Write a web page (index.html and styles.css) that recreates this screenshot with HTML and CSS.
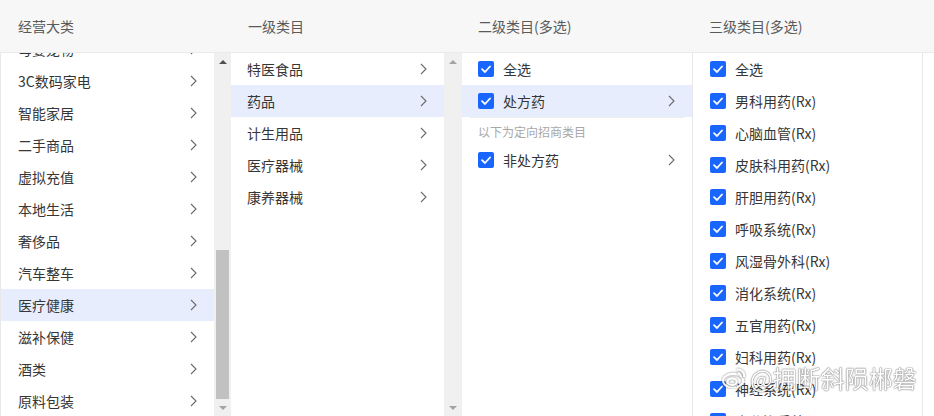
FILE: index.html
```html
<!DOCTYPE html>
<html lang="zh-CN">
<head>
<meta charset="utf-8">
<title>类目选择</title>
<link rel="stylesheet" href="styles.css">
</head>
<body>
<div class="board">
  <section class="col col-1">
    <div class="col-head">经营大类</div>
    <div class="col-body with-border-left">
      <div class="list-view">
        <ul class="list list-scrolled">
          <li class="row"><span>母婴宠物</span><svg class="chev" viewBox="0 0 7 12"><path d="M1 1 L6 6 L1 11"/></svg></li>
          <li class="row"><span>3C数码家电</span><svg class="chev" viewBox="0 0 7 12"><path d="M1 1 L6 6 L1 11"/></svg></li>
          <li class="row"><span>智能家居</span><svg class="chev" viewBox="0 0 7 12"><path d="M1 1 L6 6 L1 11"/></svg></li>
          <li class="row"><span>二手商品</span><svg class="chev" viewBox="0 0 7 12"><path d="M1 1 L6 6 L1 11"/></svg></li>
          <li class="row"><span>虚拟充值</span><svg class="chev" viewBox="0 0 7 12"><path d="M1 1 L6 6 L1 11"/></svg></li>
          <li class="row"><span>本地生活</span><svg class="chev" viewBox="0 0 7 12"><path d="M1 1 L6 6 L1 11"/></svg></li>
          <li class="row"><span>奢侈品</span><svg class="chev" viewBox="0 0 7 12"><path d="M1 1 L6 6 L1 11"/></svg></li>
          <li class="row"><span>汽车整车</span><svg class="chev" viewBox="0 0 7 12"><path d="M1 1 L6 6 L1 11"/></svg></li>
          <li class="row active"><span>医疗健康</span><svg class="chev" viewBox="0 0 7 12"><path d="M1 1 L6 6 L1 11"/></svg></li>
          <li class="row"><span>滋补保健</span><svg class="chev" viewBox="0 0 7 12"><path d="M1 1 L6 6 L1 11"/></svg></li>
          <li class="row"><span>酒类</span><svg class="chev" viewBox="0 0 7 12"><path d="M1 1 L6 6 L1 11"/></svg></li>
          <li class="row"><span>原料包装</span><svg class="chev" viewBox="0 0 7 12"><path d="M1 1 L6 6 L1 11"/></svg></li>
        </ul>
      </div>
      <div class="scrollbar">
        <div class="sb-btn"><span class="tri-up dark"></span></div>
        <div class="sb-track"><div class="sb-thumb" style="margin-top:180px;height:149px"></div></div>
        <div class="sb-btn"><span class="tri-down"></span></div>
      </div>
    </div>
  </section>

  <section class="col col-2">
    <div class="col-head">一级类目</div>
    <div class="col-body">
      <div class="list-view">
        <ul class="list">
          <li class="row"><span>特医食品</span><svg class="chev" viewBox="0 0 7 12"><path d="M1 1 L6 6 L1 11"/></svg></li>
          <li class="row active"><span>药品</span><svg class="chev" viewBox="0 0 7 12"><path d="M1 1 L6 6 L1 11"/></svg></li>
          <li class="row"><span>计生用品</span><svg class="chev" viewBox="0 0 7 12"><path d="M1 1 L6 6 L1 11"/></svg></li>
          <li class="row"><span>医疗器械</span><svg class="chev" viewBox="0 0 7 12"><path d="M1 1 L6 6 L1 11"/></svg></li>
          <li class="row"><span>康养器械</span><svg class="chev" viewBox="0 0 7 12"><path d="M1 1 L6 6 L1 11"/></svg></li>
        </ul>
      </div>
      <div class="scrollbar scrollbar-2">
        <div class="sb-btn"><span class="tri-up"></span></div>
        <div class="sb-track"></div>
        <div class="sb-btn"><span class="tri-down"></span></div>
      </div>
    </div>
  </section>

  <section class="col col-3">
    <div class="col-head">二级类目(多选)</div>
    <div class="col-body with-border-right">
      <ul class="list list-check">
        <li class="row"><span class="cb"><svg viewBox="0 0 16 16"><path d="M4 8.2 L7 11 L12 5.5"/></svg></span><span class="label">全选</span></li>
        <li class="row active divided"><span class="cb"><svg viewBox="0 0 16 16"><path d="M4 8.2 L7 11 L12 5.5"/></svg></span><span class="label">处方药</span><svg class="chev" viewBox="0 0 7 12"><path d="M1 1 L6 6 L1 11"/></svg></li>
        <li class="section-note">以下为定向招商类目</li>
        <li class="row"><span class="cb"><svg viewBox="0 0 16 16"><path d="M4 8.2 L7 11 L12 5.5"/></svg></span><span class="label">非处方药</span><svg class="chev" viewBox="0 0 7 12"><path d="M1 1 L6 6 L1 11"/></svg></li>
      </ul>
    </div>
  </section>

  <section class="col col-4">
    <div class="col-head">三级类目(多选)</div>
    <div class="col-body with-border-right">
      <ul class="list list-check">
        <li class="row"><span class="cb"><svg viewBox="0 0 16 16"><path d="M4 8.2 L7 11 L12 5.5"/></svg></span><span class="label">全选</span></li>
        <li class="row"><span class="cb"><svg viewBox="0 0 16 16"><path d="M4 8.2 L7 11 L12 5.5"/></svg></span><span class="label">男科用药(Rx)</span></li>
        <li class="row"><span class="cb"><svg viewBox="0 0 16 16"><path d="M4 8.2 L7 11 L12 5.5"/></svg></span><span class="label">心脑血管(Rx)</span></li>
        <li class="row"><span class="cb"><svg viewBox="0 0 16 16"><path d="M4 8.2 L7 11 L12 5.5"/></svg></span><span class="label">皮肤科用药(Rx)</span></li>
        <li class="row"><span class="cb"><svg viewBox="0 0 16 16"><path d="M4 8.2 L7 11 L12 5.5"/></svg></span><span class="label">肝胆用药(Rx)</span></li>
        <li class="row"><span class="cb"><svg viewBox="0 0 16 16"><path d="M4 8.2 L7 11 L12 5.5"/></svg></span><span class="label">呼吸系统(Rx)</span></li>
        <li class="row"><span class="cb"><svg viewBox="0 0 16 16"><path d="M4 8.2 L7 11 L12 5.5"/></svg></span><span class="label">风湿骨外科(Rx)</span></li>
        <li class="row"><span class="cb"><svg viewBox="0 0 16 16"><path d="M4 8.2 L7 11 L12 5.5"/></svg></span><span class="label">消化系统(Rx)</span></li>
        <li class="row"><span class="cb"><svg viewBox="0 0 16 16"><path d="M4 8.2 L7 11 L12 5.5"/></svg></span><span class="label">五官用药(Rx)</span></li>
        <li class="row"><span class="cb"><svg viewBox="0 0 16 16"><path d="M4 8.2 L7 11 L12 5.5"/></svg></span><span class="label">妇科用药(Rx)</span></li>
        <li class="row"><span class="cb"><svg viewBox="0 0 16 16"><path d="M4 8.2 L7 11 L12 5.5"/></svg></span><span class="label">神经系统(Rx)</span></li>
        <li class="row"><span class="cb"><svg viewBox="0 0 16 16"><path d="M4 8.2 L7 11 L12 5.5"/></svg></span><span class="label">内分泌系统(Rx)</span></li>
      </ul>
    </div>
  </section>

  <section class="col col-fill">
    <div class="col-head"></div>
    <div class="col-body"></div>
  </section>
</div>

<div class="watermark">
  <svg class="wm-logo" viewBox="0 0 28 24">
    <ellipse cx="13" cy="15" rx="11" ry="7.5"/>
    <ellipse cx="12" cy="16" rx="5" ry="3.6"/>
    <path d="M17 3 C22 2 26 6 25 11"/>
    <path d="M18 7 C20 7 22 9 21.5 11"/>
  </svg>
  <span class="wm-text">@拥断斜陨郴磐</span>
</div>
</body>
</html>
```

FILE: styles.css
```css
* {
  box-sizing: border-box;
}

html, body {
  margin: 0;
  padding: 0;
  background: #ffffff;
}

body {
  width: 934px;
  height: 416px;
  overflow: hidden;
  position: relative;
  font-family: "Noto Sans CJK SC", "Noto Sans", "Liberation Sans", sans-serif;
  font-size: 14px;
  color: #363636;
}

ul {
  list-style: none;
  margin: 0;
  padding: 0;
}

.board {
  display: flex;
  height: 416px;
}

.col {
  display: flex;
  flex-direction: column;
  flex: none;
}

.col-1 { width: 231px; }
.col-2 { width: 231px; }
.col-3 { width: 231px; }
.col-4 { width: 230px; }
.col-fill { flex: 1; }

.col-head {
  height: 53px;
  flex: none;
  background: #f7f7f7;
  border-bottom: 1px solid #ebebeb;
  display: flex;
  align-items: center;
  padding-left: 16px;
  padding-bottom: 1px;
  color: #5a5a5a;
  font-size: 14px;
}

.col-1 .col-head { padding-left: 18px; }
.col-2 .col-head { padding-left: 17px; }

.col-body {
  flex: 1;
  display: flex;
  min-height: 0;
  overflow: hidden;
}

.with-border-left {
  border-left: 1px solid #e8e8e8;
}

.with-border-right {
  border-right: 1px solid #e8e8e8;
}

.list-view {
  flex: 1;
  overflow: hidden;
  min-width: 0;
}

.list {
  width: 100%;
}

.list-scrolled {
  margin-top: -20px;
}

.row {
  height: 32px;
  display: flex;
  align-items: center;
  padding: 0 17px 1px 17px;
  white-space: nowrap;
}

.col-2 .row {
  padding-left: 16px;
}

.row.active {
  background: #e7edfc;
}

.row > span:first-child {
  flex: 1;
}

.chev {
  width: 7px;
  height: 12px;
  flex: none;
  margin-left: auto;
}

.chev path {
  fill: none;
  stroke: #6a6a6a;
  stroke-width: 1.1;
}

/* checkbox lists */
.list-check {
  flex: 1;
}

.col-3 .list-check .row {
  padding-left: 16px;
}

.list-check .row > span.cb {
  flex: none;
}

.cb {
  width: 16px;
  height: 16px;
  border-radius: 2px;
  background: #1966ff;
  display: flex;
  align-items: center;
  justify-content: center;
  margin-right: 9px;
}

.cb svg {
  width: 16px;
  height: 16px;
}

.cb path {
  fill: none;
  stroke: #ffffff;
  stroke-width: 1.8;
  stroke-linecap: round;
  stroke-linejoin: round;
}

.label {
  flex: 1;
}

.row.divided {
  position: relative;
}

.row.divided::after {
  content: "";
  position: absolute;
  left: 8px;
  right: 8px;
  bottom: -1px;
  height: 1px;
  background: #eeeeee;
}

.section-note {
  height: 27px;
  padding: 2px 0 0 16px;
  display: flex;
  align-items: center;
  font-size: 12px;
  color: #a8a8a8;
}

/* fake scrollbars */
.scrollbar {
  width: 17px;
  flex: none;
  background: #f0f0f0;
  display: flex;
  flex-direction: column;
}

.scrollbar-2 {
  width: 18px;
}

.sb-btn {
  height: 17px;
  flex: none;
  display: flex;
  align-items: center;
  justify-content: center;
}

.sb-track {
  flex: 1;
  display: flex;
  flex-direction: column;
  align-items: center;
}

.sb-thumb {
  width: 13px;
  background: #c1c1c1;
}

.tri-up {
  width: 0;
  height: 0;
  border-left: 4px solid transparent;
  border-right: 4px solid transparent;
  border-bottom: 4px solid #a3a3a3;
}

.tri-up.dark {
  border-bottom-color: #505050;
}

.tri-down {
  width: 0;
  height: 0;
  border-left: 4px solid transparent;
  border-right: 4px solid transparent;
  border-top: 4px solid #a3a3a3;
}

/* watermark overlay */
.watermark {
  position: absolute;
  left: 721px;
  top: 364px;
  display: flex;
  align-items: center;
  gap: 3px;
  pointer-events: none;
  opacity: 0.92;
}

.wm-logo {
  width: 26px;
  height: 22px;
}

.wm-logo ellipse,
.wm-logo path {
  fill: none;
  stroke: #ffffff;
  stroke-width: 2.2;
  filter: drop-shadow(0 0 1px rgba(0,0,0,0.55));
}

.wm-text {
  font-size: 24px;
  line-height: 28px;
  color: #ffffff;
  text-shadow: 0 0 1px rgba(0,0,0,0.7), 0 0 2px rgba(0,0,0,0.45);
}
```
